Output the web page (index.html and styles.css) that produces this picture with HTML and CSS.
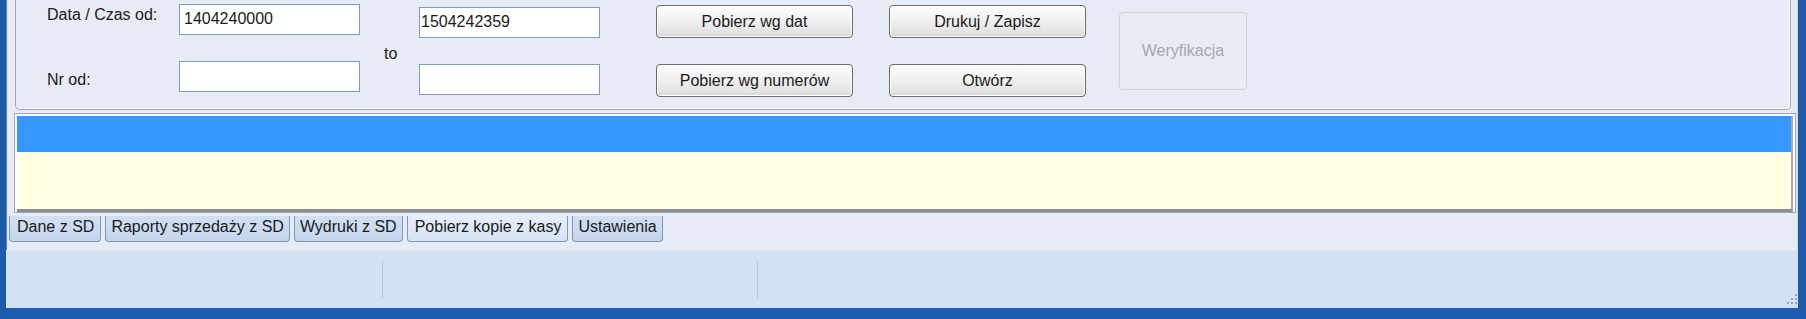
FILE: index.html
```html
<!DOCTYPE html>
<html>
<head>
<meta charset="utf-8">
<link rel="stylesheet" href="styles.css">
</head>
<body>
<div class="window">
  <div class="client">
    <div class="panel">
      <div class="col labels">
        <div class="label l1">Data / Czas od:</div>
        <div class="label l2">Nr od:</div>
      </div>
      <div class="col boxes1">
        <div class="tb tb-a">1404240000</div>
        <div class="tb tb-b"></div>
      </div>
      <div class="col to-col">
        <div class="to">to</div>
      </div>
      <div class="col boxes2">
        <div class="tb tb-c">1504242359</div>
        <div class="tb tb-d"></div>
      </div>
      <div class="col btns1">
        <div class="btn b1">Pobierz wg dat</div>
        <div class="btn b2">Pobierz wg numerów</div>
      </div>
      <div class="col btns2">
        <div class="btn b1">Drukuj / Zapisz</div>
        <div class="btn b2">Otwórz</div>
      </div>
      <div class="col verify-col">
        <div class="verify">Weryfikacja</div>
      </div>
    </div>
    <div class="list">
      <div class="grid">
        <div class="row-sel"></div>
        <div class="row-empty"></div>
      </div>
    </div>
    <div class="tabs">
      <div class="tab">Dane z SD</div>
      <div class="tab">Raporty sprzedaży z SD</div>
      <div class="tab">Wydruki z SD</div>
      <div class="tab active">Pobierz kopie z kasy</div>
      <div class="tab">Ustawienia</div>
    </div>
    <div class="status">
      <div class="cell c1"></div>
      <div class="cell c2"></div>
      <div class="cell c3"></div>
      <div class="grip">
        <svg width="14" height="14" viewBox="0 0 14 14">
          <g fill="#9aa6ba">
            <rect x="11" y="1" width="2" height="2"/>
            <rect x="7" y="5" width="2" height="2"/>
            <rect x="11" y="5" width="2" height="2"/>
            <rect x="3" y="9" width="2" height="2"/>
            <rect x="7" y="9" width="2" height="2"/>
            <rect x="11" y="9" width="2" height="2"/>
          </g>
        </svg>
      </div>
    </div>
  </div>
</div>
</body>
</html>
```
FILE: styles.css
```css
* { box-sizing: border-box; }
html, body { margin: 0; padding: 0; }
body {
  width: 1806px;
  height: 319px;
  overflow: hidden;
  font-family: "Liberation Sans", Arial, sans-serif;
  font-size: 16px;
  color: #1a1a1a;
  background: #e6ebf5;
}
.window {
  width: 1806px;
  height: 319px;
  border-left: 6px solid #1f5aa8;
  border-right: 8px solid #1f5aa8;
  border-bottom: 11px solid #1b5cb0;
  background: #e6ebf5;
  box-shadow: inset 1px 0 0 #4a86d0, inset -1px 0 0 #c9d7ee, inset 0 -1px 0 #c9d7ee;
}
.client {
  display: flex;
  flex-direction: column;
  height: 308px;
}
.panel {
  display: flex;
  height: 110px;
  margin: 0 7px 0 9px;
  border: 1px solid #9ba6b8;
  border-top: none;
  border-radius: 0 0 5px 5px;
  box-shadow: inset -1px -1px 0 #ffffff;
  padding-left: 31px;
}
.col { display: flex; flex-direction: column; }
.labels { width: 132px; }
.label { line-height: 18px; white-space: nowrap; }
.l1 { margin-top: 6px; }
.l2 { margin-top: 47px; }
.tb {
  width: 181px;
  height: 31px;
  background: #fff;
  border: 1px solid #7f9db9;
  line-height: 18px;
  padding: 5px 4px;
}
.boxes1 .tb-a { margin-top: 4px; }
.boxes1 .tb-b { margin-top: 26px; }
.to-col { width: 59px; padding-left: 24px; }
.to { margin-top: 45px; line-height: 18px; }
.boxes2 .tb { padding-left: 1px; }
.boxes2 .tb-c { margin-top: 7px; }
.boxes2 .tb-d { margin-top: 26px; }
.btns1 { margin-left: 56px; }
.btns2 { margin-left: 36px; }
.btn {
  width: 197px;
  height: 33px;
  border: 1px solid #6b6b6b;
  border-radius: 4px;
  background: linear-gradient(#fdfdfd 0%, #f1f1f1 45%, #e0e0e0 90%, #cfcfcf 100%);
  box-shadow: inset 0 0 0 1px #ffffff;
  display: flex;
  align-items: center;
  justify-content: center;
  white-space: nowrap;
}
.btn.b1 { margin-top: 5px; }
.btn.b2 { margin-top: 26px; }
.verify-col { margin-left: 33px; }
.verify {
  margin-top: 12px;
  width: 128px;
  height: 78px;
  border: 1px solid #cfd3da;
  border-radius: 4px;
  color: #a3a8b0;
  display: flex;
  align-items: center;
  justify-content: center;
  background: #e8ecf4;
}
.list {
  margin: 3px 2px 0 8px;
  border: 1px solid #9ca6b8;
  padding: 2px 2px 0 2px;
  background: #fdfdff;
}
.grid {
  border-right: 2px solid #a9a9a9;
  border-bottom: 3px solid #8e8e8e;
}
.row-sel { height: 36px; background: #3399ff; }
.row-empty { height: 57px; background: #ffffe1; }
.tabs {
  display: flex;
  gap: 4px;
  margin: 3px 0 0 3px;
  height: 27px;
}
.tab {
  height: 26px;
  padding: 0 5px;
  border: 1px solid #8596b3;
  border-top: none;
  border-radius: 0 0 4px 4px;
  background: linear-gradient(#d2e0f3, #c3d5ee);
  line-height: 22px;
  white-space: nowrap;
}
.tab:first-child { padding: 0 6px 0 7px; }
.tab.active {
  padding: 0 6px 0 7px;
  background: linear-gradient(#e6eefa, #d6e3f5);
}
.status {
  margin-top: 7px;
  flex: 1;
  background: #d3e1f5;
  border-top: 1px solid #dfe8f6;
  display: flex;
  position: relative;
}
.cell { height: 100%; }
.c1 { width: 376px; }
.c2 {
  width: 375px;
  border-left: 1px solid #b8c5d8;
  margin-top: 10px;
  height: 37px;
}
.c3 {
  border-left: 1px solid #b8c5d8;
  margin-top: 10px;
  height: 37px;
}
.grip {
  position: absolute;
  right: 0;
  bottom: 1px;
  width: 14px;
  height: 14px;
}
```
